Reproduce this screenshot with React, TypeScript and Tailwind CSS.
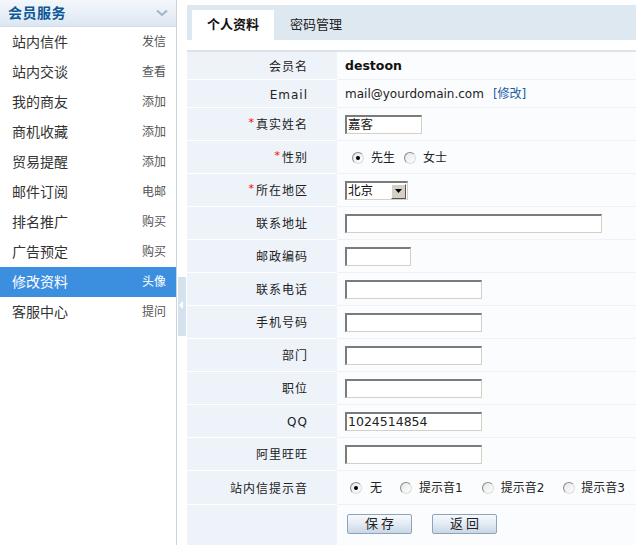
import React from "react";

const FONT = '"DejaVu Sans", "Noto Sans CJK SC", sans-serif';

const menu: [string, string][] = [
  ["站内信件", "发信"],
  ["站内交谈", "查看"],
  ["我的商友", "添加"],
  ["商机收藏", "添加"],
  ["贸易提醒", "添加"],
  ["邮件订阅", "电邮"],
  ["排名推广", "购买"],
  ["广告预定", "购买"],
  ["修改资料", "头像"],
  ["客服中心", "提问"],
];

function Input({ w, value }: { w: number; value?: string }) {
  return (
    <div
      className="h-[19px] bg-white border-t-2 border-l-2 border-r border-b border-t-[#7b7b7b] border-l-[#7b7b7b] border-r-[#d4d0c8] border-b-[#d4d0c8] text-[12.5px] leading-[16px] pl-[1px] text-[#222]"
      style={{ width: w }}
    >
      {value}
    </div>
  );
}

function Radio({ checked }: { checked?: boolean }) {
  return (
    <span className="w-[12px] h-[12px] rounded-full border border-t-[#8a8a8a] border-l-[#8a8a8a] border-r-[#dcdcdc] border-b-[#dcdcdc] bg-gradient-to-br from-[#e6e6e6] to-white flex items-center justify-center shrink-0">
      {checked && <span className="w-[4px] h-[4px] rounded-full bg-black" />}
    </span>
  );
}

function Btn({ text }: { text: string }) {
  return (
    <div className="w-[65px] h-[20px] rounded-[2px] border border-[#8ca5bf] bg-gradient-to-b from-[#f7f9fc] via-[#e3ebf3] to-[#c9d7e5] flex items-center justify-center text-[13px] text-[#222] tracking-[3px] pl-[3px]">
      {text}
    </div>
  );
}

type Row = { label: string; req?: boolean; h: number; content: React.ReactNode };

export default function App() {
  const rows: Row[] = [
    {
      label: "会员名",
      h: 28,
      content: <span className="font-bold text-[12.5px] text-[#111]">destoon</span>,
    },
    {
      label: "Email",
      h: 28,
      content: (
        <span className="text-[12px] text-[#222]">
          mail@yourdomain.com<span className="ml-[9px] text-[#1b5ea6]">[修改]</span>
        </span>
      ),
    },
    { label: "真实姓名", req: true, h: 33, content: <Input w={77} value="嘉客" /> },
    {
      label: "性别",
      req: true,
      h: 33,
      content: (
        <div className="flex items-center text-[12px] text-[#222] ml-[7px]">
          <Radio checked />
          <span className="ml-[7px]">先生</span>
          <span className="ml-[9px]"><Radio /></span>
          <span className="ml-[7px]">女士</span>
        </div>
      ),
    },
    {
      label: "所在地区",
      req: true,
      h: 33,
      content: (
        <div className="w-[63px] h-[19px] bg-white border-t-2 border-l-2 border-r border-b border-t-[#7b7b7b] border-l-[#7b7b7b] border-r-[#d4d0c8] border-b-[#d4d0c8] flex items-center justify-between text-[12.5px] text-[#111]">
          <span className="pl-[1px]">北京</span>
          <span className="w-[15px] h-[15px] mr-[1px] bg-[#d4d0c8] border border-t-white border-l-white border-r-[#555] border-b-[#555] flex items-center justify-center">
            <svg width="7" height="4" viewBox="0 0 7 4"><path d="M0 0h7L3.5 4z" fill="#000" /></svg>
          </span>
        </div>
      ),
    },
    { label: "联系地址", h: 33, content: <Input w={257} /> },
    { label: "邮政编码", h: 33, content: <Input w={66} /> },
    { label: "联系电话", h: 33, content: <Input w={137} /> },
    { label: "手机号码", h: 33, content: <Input w={137} /> },
    { label: "部门", h: 33, content: <Input w={137} /> },
    { label: "职位", h: 33, content: <Input w={137} /> },
    { label: "QQ", h: 33, content: <Input w={137} value="1024514854" /> },
    { label: "阿里旺旺", h: 33, content: <Input w={137} /> },
    {
      label: "站内信提示音",
      h: 34,
      content: (
        <div className="flex items-center text-[12px] text-[#222] ml-[5px]">
          <Radio checked />
          <span className="ml-[8px]">无</span>
          <span className="ml-[18px]"><Radio /></span>
          <span className="ml-[7px]">提示音1</span>
          <span className="ml-[19px]"><Radio /></span>
          <span className="ml-[7px]">提示音2</span>
          <span className="ml-[19px]"><Radio /></span>
          <span className="ml-[6px]">提示音3</span>
        </div>
      ),
    },
  ];

  return (
    <div className="flex w-[636px] h-[545px] bg-white overflow-hidden" style={{ fontFamily: FONT }}>
      {/* Sidebar */}
      <div className="w-[177px] shrink-0 border-r border-[#c9d4df] bg-white flex flex-col">
        <div className="h-[27px] bg-gradient-to-b from-[#f4f7fb] to-[#dde7f1] border-b border-[#cfdbe7] flex items-center justify-between pl-[8px] pr-[8px]">
          <span className="text-[14px] font-bold text-[#0c5796] tracking-[0.5px]">会员服务</span>
          <svg width="12" height="8" viewBox="0 0 12 8">
            <path d="M1 1.5l5 4.5 5-4.5" fill="none" stroke="#9fb4c8" strokeWidth="2" />
          </svg>
        </div>
        {menu.map(([l, r], i) => {
          const active = i === 8;
          return (
            <div
              key={l}
              className={`h-[30px] flex items-center justify-between pl-[12px] pr-[10px] ${active ? "bg-[#3c8fdf]" : ""}`}
            >
              <span className={`text-[14px] ${active ? "text-white" : "text-[#333]"}`}>{l}</span>
              <span className={`text-[12px] ${active ? "text-white" : "text-[#555]"}`}>{r}</span>
            </div>
          );
        })}
      </div>

      {/* Collapse handle column */}
      <div className="w-[10px] shrink-0 flex flex-col">
        <div className="h-[277px]" />
        <div className="ml-[1px] w-[8px] h-[59px] bg-[#d4e2ee] flex items-center">
          <svg width="5" height="8" viewBox="0 0 5 8" className="ml-[1px] -mt-[4px]">
            <path d="M4 0v8L0 4z" fill="#fff" />
          </svg>
        </div>
      </div>

      {/* Main */}
      <div className="flex-1 flex flex-col pt-[5px]">
        <div className="h-[35px] bg-[#dee8f0] flex items-end pl-[5px]">
          <div className="w-[82px] h-[30px] bg-white flex items-center justify-center text-[13px] font-bold text-[#111]">
            个人资料
          </div>
          <div className="w-[84px] h-[30px] flex items-center justify-center text-[13px] text-[#222]">
            密码管理
          </div>
        </div>
        <div className="h-[10px]" />
        <div className="flex-1 border-t-2 border-[#dde3ea] flex flex-col">
          {rows.map((r) => (
            <div key={r.label} className="flex" style={{ height: r.h }}>
              <div className="w-[150px] shrink-0 bg-[#eef3fa] border-b border-white flex items-center justify-end pr-[29px] pt-[2px] text-[12px] tracking-[1px] text-[#222]">
                {r.req && <span className="text-[#f00] text-[11px] mr-[1px] -mt-[4px]">*</span>}
                {r.label}
              </div>
              <div className="flex-1 bg-[#fbfcfd] border-b border-[#eef2f6] flex items-center pl-[8px] pt-[1px]">
                {r.content}
              </div>
            </div>
          ))}
          <div className="flex flex-1">
            <div className="w-[150px] shrink-0 bg-[#eef3fa]" />
            <div className="flex-1 bg-[#fbfcfd] flex items-start pt-[9px] pl-[10px] gap-[20px]">
              <Btn text="保存" />
              <Btn text="返回" />
            </div>
          </div>
        </div>
      </div>
    </div>
  );
}
